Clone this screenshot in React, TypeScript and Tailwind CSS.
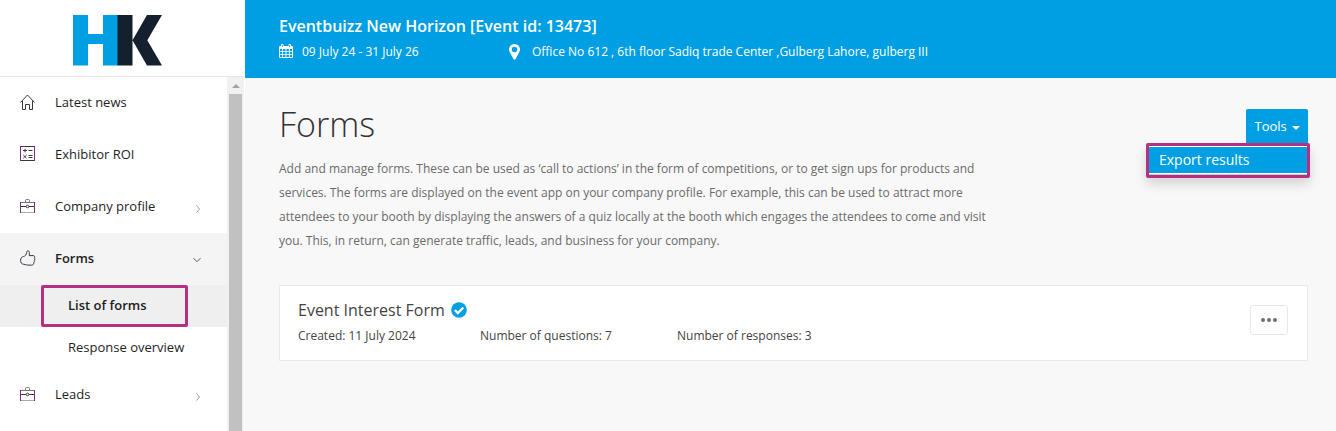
import React from "react";

const ink = "#3d3340";
const plum = "#7b2d80";

function HomeIcon() {
  return (
    <svg width="16" height="16" viewBox="0 0 16 16" fill="none" stroke={ink} strokeWidth="1">
      <path d="M.4 8.500 7.500 1l7.100 7.500M2.500 6.700v8.800h3v-5h4v5h3V6.700" />
    </svg>
  );
}
function CalculatorIcon() {
  return (
    <svg width="16" height="16" viewBox="0 0 16 16" fill="none" stroke={ink} strokeWidth="1">
      <path d="M0 .5h15M0 14.500h15M3 4.500h4M5 2.800v3.500M8.500 4.500h4M8.500 9.500h4M8.500 11.500h4M3.300 9l3.200 3.200M6.500 9l-3.200 3.200" />
      <path d="M.5 0v15M14.500 0v15" stroke={plum} />
    </svg>
  );
}
function BriefcaseIcon() {
  return (
    <svg width="16" height="16" viewBox="0 0 16 16" fill="none" stroke={ink} strokeWidth="1">
      <path d="M0 4.500h15" stroke="#777777" />
      <path d="M5.500 4V2.500q0-1 1-1h2q1 0 1 1V4" stroke="#777777" />
      <path d="M0 8.500h6M9 8.500h6" />
      <circle cx="7.500" cy="8.500" r="1.300" />
      <path d="M0 14.500h15" stroke="#aaaaaa" />
      <path d="M.5 4v11M14.500 4v11" stroke={plum} />
    </svg>
  );
}
function ThumbIcon() {
  return (
    <svg width="16" height="16" viewBox="0 0 16 16" fill="none" stroke={ink} strokeWidth="1" strokeLinejoin="round">
      <path d="M.6 10.500C.6 8 1.600 7 3.500 6.500 5.500 6 6.400 4.500 6.600 2.500 6.700.2 9.300.2 9.300 2.500V5.600h3.900c1.700 0 1.900 1.800 1 2.400 1 .6.800 2-.1 2.400.7.800.3 1.900-.4 2.200.3 1.300-.4 2.500-2 2.500H7.500c-1.800 0-2.200-.9-4-.9C1.500 14.200.6 12.500.6 10.500z" />
    </svg>
  );
}
function Chevron({ down = false }: { down?: boolean }) {
  return (
    <svg className={down ? "ml-auto mt-[2px]" : "ml-auto -mr-px mt-1"} width="8" height="8" viewBox="0 0 8 8" fill="none" stroke={down ? "#555555" : "#999999"}>
      <path d={down ? "M.5 2.200 4 5.700l3.500-3.500" : "M2.500.5 5.500 4l-3 3.500"} />
    </svg>
  );
}
function CalendarIcon() {
  return (
    <svg width="14" height="14" viewBox="0 0 14 14" fill="#fff">
      <path fillRule="evenodd" d="M0 3q0-1 1-1h1V1q0-1 1-1h.5q1 0 1 1v1h5V1q0-1 1-1h.5q1 0 1 1v1h1q1 0 1 1v10q0 1-1 1H1q-1 0-1-1zM1 5v2h2.200V5zm3 0v2h2.500V5zm3.400 0v2h2.500V5zm3.400 0v2H13V5zM1 7.800V10h2.200V7.800zm3 0V10h2.500V7.800zm3.400 0V10h2.500V7.800zm3.400 0V10H13V7.800zM1 10.800V13h2.200v-2.200zm3 0V13h2.500v-2.200zm3.400 0V13h2.500v-2.200zm3.400 0V13H13v-2.200zM2.900 1v2.200h.8V1zm7.400 0v2.200h.8V1z" />
    </svg>
  );
}

function Item({ icon, label, active, arrow }: { icon: React.ReactNode; label: string; active?: boolean; arrow?: "right" | "down" }) {
  return (
    <div className={"flex h-[52px] items-center pl-5 pr-[26px] " + (active ? "bg-[#f4f4f4] font-semibold" : "")}>
      <span className="w-[35px] pb-[2px]">{icon}</span>
      <span>{label}</span>
      {arrow && <Chevron down={arrow === "down"} />}
    </div>
  );
}

export default function App() {
  return (
    <div className="flex h-[431px] w-[1336px] overflow-hidden bg-[#f8f8f8] font-['Open_Sans',sans-serif] text-[13px] text-[#1e1e1e]">
      <aside className="flex w-[245px] shrink-0 flex-col bg-white">
        <div className="flex h-[77px] w-[244px] shrink-0 border-b border-[#e7e7e7] pl-[73px] pt-[15px]">
          <svg width="89" height="51" viewBox="0 0 89 51">
            <path d="M0 0h15v19h15V0h15v50.500H30V29H15v21.500H0z" fill="#009fe3" />
            <path d="M44.500 0h15v50.500h-15zM59.500 25.200 74 0h15L74.300 25.200 89 50.500H74z" fill="#14202e" />
          </svg>
        </div>
        <div className="flex min-h-0 flex-1">
          <nav className="w-[227px]">
            <Item icon={<HomeIcon />} label="Latest news" />
            <Item icon={<CalculatorIcon />} label="Exhibitor ROI" />
            <Item icon={<BriefcaseIcon />} label="Company profile" arrow="right" />
            <Item icon={<ThumbIcon />} label="Forms" active arrow="down" />
            <div className="flex h-[42px] bg-[#efefef] pl-[41px] font-semibold">
              <div className="flex w-[147px] items-center rounded-[2px] border-3 border-[#b72f82] pl-6">List of forms</div>
            </div>
            <div className="flex h-[42px] items-center pl-[68px]">Response overview</div>
            <Item icon={<BriefcaseIcon />} label="Leads" arrow="right" />
          </nav>
          <div className="flex w-[17px] flex-col items-center bg-[#f1f1f1]">
            <div className="flex h-[17px] items-center">
              <svg width="8" height="4" viewBox="0 0 8 4" fill="#a3a3a3"><path d="M0 4 4 0l4 4z" /></svg>
            </div>
            <div className="w-[13px] flex-1 bg-[#c1c1c1]" />
          </div>
        </div>
      </aside>
      <main className="flex-1">
        <header className="h-[78px] bg-[#009fe3] pl-[34px] pt-[14px] text-white">
          <h1 className="text-[16px] font-semibold leading-6">Eventbuizz New Horizon [Event id: 13473]</h1>
          <div className="flex h-[26px] items-center text-[12px]">
            <div className="flex w-[230px] items-center gap-[9px]"><CalendarIcon /><span className="pt-[2px]">09 July 24 - 31 July 26</span></div>
            <svg className="mt-px" width="11" height="16" viewBox="0 0 11 16" fill="#fff">
              <path fillRule="evenodd" d="M5.500 0A5.400 5.400 0 0 1 11 5.500c0 1.200-.3 1.900-.7 2.600L6.600 15q-1 1.500-2.100 0L.8 8.200C.3 7.400 0 6.700 0 5.500A5.400 5.400 0 0 1 5.500 0zm0 2.800a2.700 2.700 0 1 0 0 5.400 2.700 2.700 0 0 0 0-5.400z" />
            </svg>
            <span className="ml-3 pt-[2px]">Office No 612 , 6th floor Sadiq trade Center ,Gulberg Lahore, gulberg III</span>
          </div>
        </header>
        <section className="pl-[34px] pr-7 pt-[31px]">
          <div className="flex h-[176px] justify-between">
            <div>
              <h2 className="h-[48px] text-[34px] font-light leading-[30px] text-[#333333]">Forms</h2>
              <p className="whitespace-pre text-[12px] leading-6 text-[#6b6b6b]">{"Add and manage forms. These can be used as ‘call to actions’ in the form of competitions, or to get sign ups for products and\nservices. The forms are displayed on the event app on your company profile. For example, this can be used to attract more\nattendees to your booth by displaying the answers of a quiz locally at the booth which engages the attendees to come and visit\nyou. This, in return, can generate traffic, leads, and business for your company."}</p>
            </div>
            <div className="relative flex flex-col items-end">
              <button className="flex h-[34px] w-[62px] items-center gap-[5px] rounded-t-[2px] bg-[#009fe3] pl-[8.500px] pt-[2px] text-[13px] text-white">
                Tools
                <svg className="mt-px" width="8" height="4" viewBox="0 0 8 4" fill="#fff"><path d="M0 0h8L4 4z" /></svg>
              </button>
              <div className="absolute -right-[2px] top-[34px] h-[35px] w-[164px] rounded-[2px] border-3 border-[#b72f82] bg-white pt-px shadow-[0_6px_12px_rgba(0,0,0,0.15)]">
                <div className="flex h-[26px] items-center bg-[#009fe3] pb-[2px] pl-[10px] text-[14px] text-white">Export results</div>
                <div className="mt-px h-px bg-[#cccccc]" />
              </div>
            </div>
          </div>
          <article className="flex h-[76px] items-start justify-between border border-[#e9e9e9] bg-white pl-[18px] pr-[19px] text-[#444444]">
            <div>
              <div className="mt-3 flex h-6 items-center gap-[6px] text-[16px]">
                Event Interest Form
                <svg className="-mt-px" width="16" height="16" viewBox="0 0 16 16"><circle cx="8" cy="8" r="7.800" fill="#009fe3" /><path d="m3.800 8 3 3 5.500-5.500" fill="none" stroke="#fff" strokeWidth="2.300" /></svg>
              </div>
              <div className="flex h-[28px] items-center text-[12px]">
                <span className="w-[182px]">Created: 11 July 2024</span>
                <span className="w-[197px]">Number of questions: 7</span>
                <span>Number of responses: 3</span>
              </div>
            </div>
            <button className="mt-[19px] flex h-[30px] w-[38px] items-center justify-center gap-[2px] rounded-[3px] border border-[#e8e8e8]">
              <i className="size-1 rounded-full bg-[#707070]" /><i className="size-1 rounded-full bg-[#707070]" /><i className="size-1 rounded-full bg-[#707070]" />
            </button>
          </article>
        </section>
      </main>
    </div>
  );
}
